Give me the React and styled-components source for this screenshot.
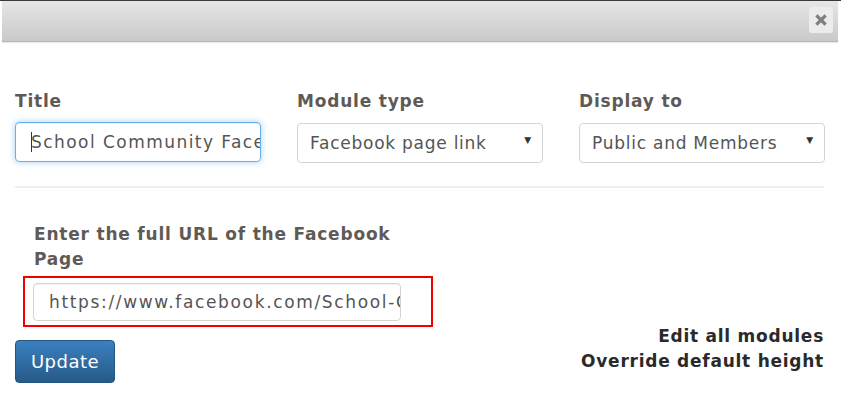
import React from "react";
import styled, { createGlobalStyle } from "styled-components";

const Global = createGlobalStyle`
  html, body { margin: 0; padding: 0; background: #fff; }
  body { font-family: "DejaVu Sans", Verdana, sans-serif; width: 841px; height: 397px; overflow: hidden; }
  * { box-sizing: border-box; }
`;

const Frame = styled.div`
  border-top: 1px solid #3a3a3a;
  width: 841px;
  height: 397px;
`;

const Header = styled.div`
  margin: 0 3px 0 2px;
  height: 41px;
  background: linear-gradient(#e6e6e6, #c9c9c9);
  border-bottom: 1px solid #b4b4b4;
  box-shadow: 0 1px 1px rgba(0,0,0,0.08);
  display: flex;
  align-items: center;
  justify-content: flex-end;
  padding-right: 5px;
`;

const Close = styled.button`
  width: 24px;
  height: 26px;
  border: none;
  border-radius: 3px;
  background: #ececec;
  display: flex;
  align-items: center;
  justify-content: center;
  padding: 0;
  margin-top: -2px;
`;

const Body = styled.div`
  padding: 50px 17px 0 15px;
`;

const Row = styled.div`
  display: grid;
  grid-template-columns: 246px 246px 246px;
  column-gap: 36px;
  padding-bottom: 23px;
  border-bottom: 2px solid #eeeeee;
`;

const Field = styled.div`
  display: flex;
  flex-direction: column;
`;

const Label = styled.label`
  font-weight: bold;
  font-size: 17px;
  letter-spacing: 0.8px;
  color: #5f5a55;
  line-height: 18px;
  margin-bottom: 12px;
`;

const TextInput = styled.div`
  height: 40px;
  border: 1px solid ${p => (p.focus ? "#66afe9" : "#d4d4d4")};
  box-shadow: ${p => (p.focus ? "0 0 6px rgba(102,175,233,0.6), inset 0 1px 1px rgba(0,0,0,0.075)" : "inset 0 1px 1px rgba(0,0,0,0.05)")};
  border-radius: 4px;
  padding: 0 15px;
  font-size: 17px;
  letter-spacing: ${p => p.spacing || "0.75px"};
  color: #555;
  display: flex;
  align-items: center;
  white-space: nowrap;
  overflow: hidden;
`;

const Caret = styled.span`
  display: inline-block;
  flex: none;
  width: 1px;
  height: 20px;
  background: #333;
  margin-right: -1px;
`;

const Select = styled.div`
  height: 40px;
  margin-top: 1px;
  border: 1px solid #d4d4d4;
  border-radius: 4px;
  padding: 0 10px 0 12px;
  font-size: 17px;
  letter-spacing: 0.75px;
  color: #555;
  display: flex;
  align-items: center;
  justify-content: space-between;
`;

const Arrow = styled.span`
  font-size: 9px;
  color: #333;
  margin-top: -6px;
`;

const Lower = styled.div`
  display: flex;
  justify-content: space-between;
  align-items: flex-end;
  padding-top: 34px;
`;

const UrlBlock = styled.div`
  display: flex;
  flex-direction: column;
`;

const UrlLabel = styled.div`
  font-weight: bold;
  font-size: 17px;
  letter-spacing: 0.8px;
  line-height: 25px;
  color: #5f5a55;
  width: 400px;
  padding-left: 19px;
`;

const Highlight = styled.div`
  margin: 4px 0 0 8px;
  width: 410px;
  height: 51px;
  border: 2px solid #f20000;
  padding: 5px 30px 0 8px;
`;

const UrlInput = styled(TextInput)`
  height: 38px;
  width: 368px;
`;

const Button = styled.button`
  margin-top: 13px;
  width: 100px;
  height: 43px;
  border: 1px solid #245580;
  border-radius: 4px;
  background: linear-gradient(#3a80c0, #265a88);
  color: #fff;
  font-family: "DejaVu Sans", Verdana, sans-serif;
  font-size: 18px;
  letter-spacing: 0.5px;
  padding: 0;
`;

const Links = styled.div`
  display: flex;
  flex-direction: column;
  align-items: flex-end;
  margin-bottom: 9px;
`;

const Link = styled.div`
  font-weight: bold;
  font-size: 17px;
  letter-spacing: 0.75px;
  line-height: 25px;
  color: #2a2a2a;
`;

export default function App() {
  return (
    <>
      <Global />
      <Frame>
        <Header>
          <Close aria-label="close">
            <svg width="12" height="12" viewBox="0 0 12 12">
              <path d="M2.5 2.5 L9.5 9.5 M9.5 2.5 L2.5 9.5" stroke="#7f7f7f" strokeWidth="3.2" strokeLinecap="square" />
            </svg>
          </Close>
        </Header>
        <Body>
          <Row>
            <Field>
              <Label>Title</Label>
              <TextInput focus spacing="1.45px">
                <Caret />School Community Facebook
              </TextInput>
            </Field>
            <Field>
              <Label>Module type</Label>
              <Select>
                <span>Facebook page link</span>
                <Arrow>▼</Arrow>
              </Select>
            </Field>
            <Field>
              <Label>Display to</Label>
              <Select>
                <span>Public and Members</span>
                <Arrow>▼</Arrow>
              </Select>
            </Field>
          </Row>
          <Lower>
            <UrlBlock>
              <UrlLabel>Enter the full URL of the Facebook Page</UrlLabel>
              <Highlight>
                <UrlInput spacing="1.65px">https://www.facebook.com/School-Community</UrlInput>
              </Highlight>
              <Button>Update</Button>
            </UrlBlock>
            <Links>
              <Link>Edit all modules</Link>
              <Link>Override default height</Link>
            </Links>
          </Lower>
        </Body>
      </Frame>
    </>
  );
}
